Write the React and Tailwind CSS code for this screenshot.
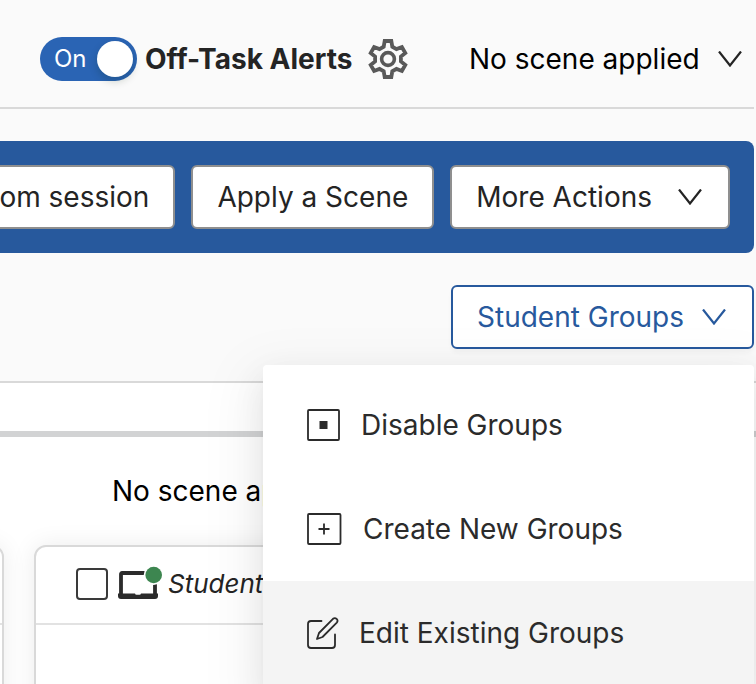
import { useState } from "react";

const groupActions = [
  { id: "disable", label: "Disable Groups", Icon: DisableIcon },
  { id: "create", label: "Create New Groups", Icon: CreateIcon },
  { id: "edit", label: "Edit Existing Groups", Icon: EditIcon },
];

function Chevron() {
  return (
    <svg
      className="h-4 w-6 shrink-0"
      viewBox="0 0 24 16"
      fill="none"
      stroke="currentColor"
      strokeWidth="2.2"
      aria-hidden="true"
    >
      <path d="M1 0.5 12 14.5 23 0.5" />
    </svg>
  );
}

function GearIcon() {
  return (
    <svg
      className="h-10 w-10"
      viewBox="-20 -20 40 40"
      fill="none"
      stroke="currentColor"
      strokeWidth="3.8"
      aria-hidden="true"
    >
      <path d="M-3.3-18H3.3L4.3-12.3 8.5-9.900 13.9-12 17.3-6 12.900-2.4V2.4L17.3 6 13.9 12 8.5 9.900 4.3 12.3 3.3 18H-3.3L-4.3 12.3-8.5 9.900-13.9 12-17.3 6-12.900 2.4V-2.4L-17.3-6-13.9-12-8.5-9.900-4.3-12.3Z" />
      <circle r="6.4" strokeWidth="3.6" />
    </svg>
  );
}

function DisableIcon() {
  return (
    <svg className="h-8 w-[34px]" viewBox="0 0 34 32" fill="none" aria-hidden="true">
      <rect x="1" y="1" width="31" height="30" rx="1" stroke="currentColor" strokeWidth="1.8" />
      <rect x="12.5" y="12" width="8" height="8" fill="currentColor" />
    </svg>
  );
}

function CreateIcon() {
  return (
    <svg
      className="h-8 w-9"
      viewBox="0 0 36 32"
      fill="none"
      stroke="currentColor"
      strokeWidth="1.8"
      aria-hidden="true"
    >
      <rect x="1" y="1" width="32.500" height="30" rx="1" />
      <path d="M11.5 16h11M17 10.5v11" />
    </svg>
  );
}

function EditIcon() {
  return (
    <svg
      className="h-8 w-8"
      viewBox="0 0 32 32"
      fill="none"
      stroke="currentColor"
      strokeWidth="1.8"
      strokeLinecap="round"
      strokeLinejoin="round"
      aria-hidden="true"
    >
      <path d="M14.500 4H4a3 3 0 0 0-3 3v21a3 3 0 0 0 3 3h21a3 3 0 0 0 3-3V17.500" />
      <path d="M26 1.800a2.700 2.700 0 0 1 3.800 3.800L15.500 20 10 22l2-6Z" />
    </svg>
  );
}

function LaptopIcon() {
  return (
    <svg className="h-8 w-11 overflow-visible" viewBox="0 0 44 32" fill="none" aria-hidden="true">
      <path d="M3 26V6a1 1 0 0 1 1-1H37V26" stroke="#2b2b2b" strokeWidth="3.8" />
      <path
        d="M0 25.500H17a1.500 1.500 0 0 0 1.500 1.200h3a1.500 1.500 0 0 0 1.500-1.200H40V28a3 3 0 0 1-3 3H3a3 3 0 0 1-3-3Z"
        fill="#2b2b2b"
      />
      <circle cx="35.700" cy="7" r="10" fill="#fff" />
      <circle cx="35.700" cy="7" r="8.300" fill="#3d8650" />
    </svg>
  );
}

function StudentCard({ name }) {
  return (
    <article className="h-96 w-[400px] shrink-0 rounded-xl border-2 border-[#d9d9d9] bg-white shadow-[0_0_24px_rgba(0,0,0,0.08)]">
      <header className="flex h-[78px] items-center border-b-2 border-[#e2e2e2] pb-0.5 pl-10">
        <input
          type="checkbox"
          aria-label={`Select ${name}`}
          className="h-8 w-8 appearance-none rounded-sm border-2 border-[#3a3a3a] bg-white checked:bg-[#2a64b4]"
        />
        <div className="ml-2.5">
          <LaptopIcon />
        </div>
        <span className="ml-1.5 text-[26px] leading-8 whitespace-nowrap italic">{name}</span>
      </header>
    </article>
  );
}

export default function App() {
  const [alertsOn, setAlertsOn] = useState(true);
  const [menuOpen, setMenuOpen] = useState(true);

  const actionButton =
    "flex h-16 shrink-0 items-center rounded-md border-2 border-[#8f8f8f] bg-white pl-6 whitespace-nowrap";

  return (
    <div className="flex h-screen flex-col overflow-hidden bg-[#fafafa] pr-0.5 font-['Inter',sans-serif] text-[28px] leading-10 text-[#242424]">
      {/* Top bar */}
      <header className="flex shrink-0 items-center justify-between border-b-2 border-[#d9d9d9] pt-8 pr-3 pb-[21px] pl-10">
        <div className="flex h-[54px] items-center">
          <label className="flex cursor-pointer items-center">
            <input
              type="checkbox"
              role="switch"
              className="peer sr-only"
              checked={alertsOn}
              onChange={(e) => setAlertsOn(e.target.checked)}
            />
            <span
              className={`flex h-11 w-[97px] items-center justify-between rounded-full pr-1 pl-3.5 text-2xl text-white ${
                alertsOn ? "bg-[#2a64b4]" : "flex-row-reverse bg-gray-400"
              }`}
            >
              {alertsOn ? "On" : "Off"}
              <span className="h-9 w-9 rounded-full bg-white shadow-[0_4px_8px_rgba(0,35,11,0.2)]" />
            </span>
            <span className="ml-2 font-bold">Off-Task Alerts</span>
          </label>
          <button type="button" aria-label="Alert settings" className="ml-4 text-[#595959]">
            <GearIcon />
          </button>
        </div>

        <div className="flex items-center gap-[18px]">
          <select aria-label="Scene" className="appearance-none bg-transparent text-black">
            <option>No scene applied</option>
          </select>
          <Chevron />
        </div>
      </header>

      {/* Class actions */}
      <div className="mt-8 flex h-28 shrink-0 items-center justify-end gap-4 rounded-r-lg bg-[#27599d] pr-6">
        <button type="button" className={`${actionButton} pr-6`}>
          Zoom session
        </button>
        <button type="button" className={`${actionButton} pr-6`}>
          Apply a Scene
        </button>
        <button type="button" className={`${actionButton} gap-[26px] pr-[26px]`}>
          More Actions
          <Chevron />
        </button>
      </div>

      <div className="mt-8 flex shrink-0 justify-end">
        <div className="relative">
          <button
            type="button"
            aria-expanded={menuOpen}
            onClick={() => setMenuOpen(!menuOpen)}
            className="flex h-16 items-center gap-[18px] rounded-md border-2 border-[#27599d] bg-white pr-[26px] pl-6 text-[#27599d] shadow-[0_4px_4px_rgba(0,0,0,0.03)]"
          >
            Student Groups
            <Chevron />
          </button>

          {menuOpen && (
            <ul className="absolute top-20 right-0 z-10 w-[491px] rounded bg-white py-2 shadow-[0_12px_32px_rgba(0,0,0,0.08),0_6px_12px_-8px_rgba(0,0,0,0.12),0_18px_56px_16px_rgba(0,0,0,0.05)]">
              {groupActions.map(({ id, label, Icon }) => (
                <li key={id}>
                  <button
                    type="button"
                    className={`flex h-[104px] w-full items-center gap-5 pl-11 text-[#2b2b2b] ${
                      id === "edit" ? "bg-[#f4f4f4]" : "hover:bg-[#f4f4f4]"
                    }`}
                  >
                    <Icon />
                    {label}
                  </button>
                </li>
              ))}
            </ul>
          )}
        </div>
      </div>

      {/* Student list */}
      <main className="mt-8 -mr-0.5 grow border-t-2 border-[#d9d9d9] bg-white">
        <div className="h-[54px] border-b-[6px] border-[#d2d3d4]" />
        <p className="py-[34px] pl-28 text-black">No scene applied</p>
        <div className="-ml-[396px] flex gap-[30px]">
          <StudentCard name="Student One" />
          <StudentCard name="Student Two" />
        </div>
      </main>
    </div>
  );
}
